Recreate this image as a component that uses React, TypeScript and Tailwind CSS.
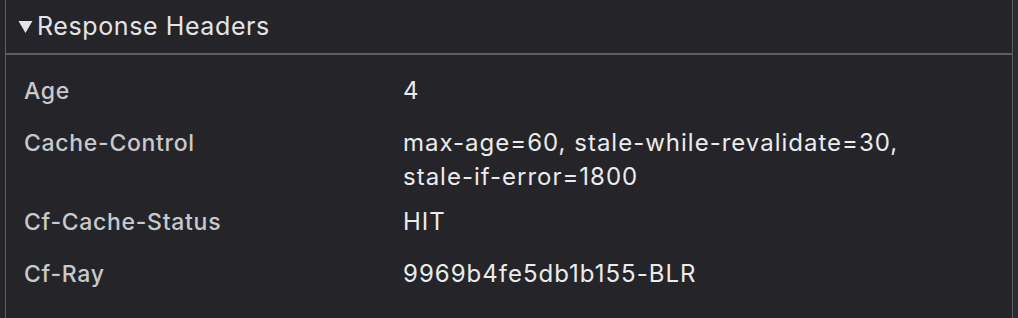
const rows: { name: string; value: string }[] = [
  { name: "Age", value: "4" },
  { name: "Cache-Control", value: "max-age=60, stale-while-revalidate=30, stale-if-error=1800" },
  { name: "Cf-Cache-Status", value: "HIT" },
  { name: "Cf-Ray", value: "9969b4fe5db1b155-BLR" },
];

export default function App() {
  return (
    <div className="flex h-[318px] w-[1018px] overflow-hidden bg-[#252529] font-['Inter','Noto_Sans',sans-serif] antialiased">
      <div className="w-[5px] shrink-0" />
      <section className="flex flex-1 flex-col border-x border-[#5e5e62]">
        <header className="flex h-[55px] shrink-0 items-center gap-[4px] border-b-2 border-[#5e5e62] pl-[12px]">
          <svg width="15" height="13" viewBox="0 0 15 13" className="shrink-0">
            <polygon points="0.5,1 14.5,1 7.5,13" fill="#e4e4e7" />
          </svg>
          <span className="text-[25px] tracking-[0.6px] text-[#e4e4e7]">Response Headers</span>
        </header>
        <div className="flex flex-col pt-[14px]">
          {rows.map((r) => (
            <div key={r.name} className="flex min-h-[52px] pt-[5px] pb-[6px] leading-[34px]">
              <div className="w-[397px] shrink-0 pl-[18px] text-[23px] font-medium tracking-[0.7px] text-[#c9c9cc]">
                {r.name}
              </div>
              <div className="w-[540px] text-[24px] tracking-[1px] text-[#ebebed]">{r.value}</div>
            </div>
          ))}
        </div>
      </section>
      <div className="w-[5px] shrink-0 bg-[#2b2b2f]" />
    </div>
  );
}
